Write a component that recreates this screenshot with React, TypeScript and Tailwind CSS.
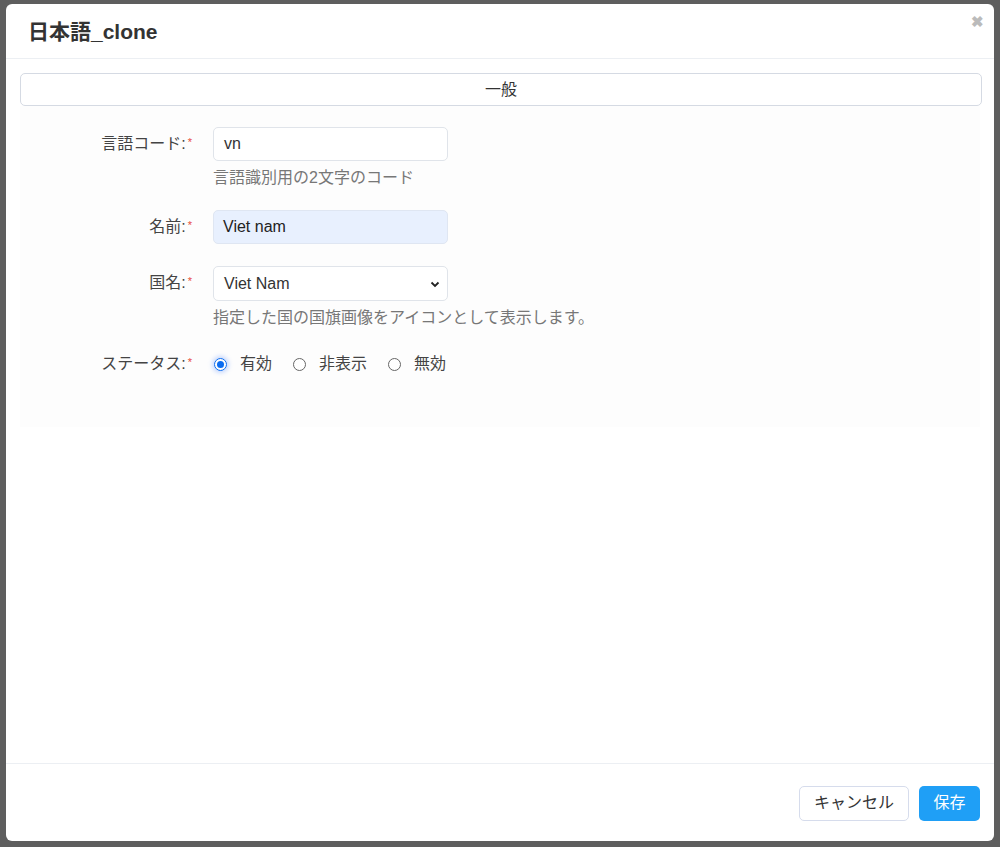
import React from "react";

const font = { fontFamily: '"Liberation Sans", "Noto Sans CJK JP", sans-serif' };

function Label({ children }: { children: React.ReactNode }) {
  return (
    <div className="text-right pr-[21px] text-[16px] text-[#444] leading-[34px]">
      {children}
      <span className="text-[#e74c3c] text-[11px] align-top relative top-[-2px] ml-[2px]">*</span>
    </div>
  );
}

function Radio({ checked, label }: { checked?: boolean; label: string }) {
  return (
    <label className="flex items-center gap-[13px] mr-[21px]">
      <span
        className={
          checked
            ? "w-[13px] h-[13px] rounded-full border border-[#0b6cf0] flex items-center justify-center shadow-[0_0_4px_2px_rgba(100,150,255,0.35)]"
            : "w-[13px] h-[13px] rounded-full border border-[#666] bg-white"
        }
      >
        {checked && <span className="w-[7px] h-[7px] rounded-full bg-[#0b6cf0]" />}
      </span>
      <span className="text-[16px] text-[#444]">{label}</span>
    </label>
  );
}

export default function App() {
  return (
    <div className="w-[1000px] h-[847px] bg-[#5e5e5e] pt-[4px] pl-[6px]" style={font}>
      <div className="w-[988px] h-[837px] bg-white rounded-[6px] flex flex-col relative">
        <div className="h-[55px] border-b border-[#eceff3] flex items-center pl-[22px] pt-[2px]">
          <h1 className="text-[21px] font-bold text-[#333]">日本語_clone</h1>
        </div>
        <button className="absolute right-[10px] top-[10px] text-[#bbb] text-[15px] font-bold leading-none">
          ✖
        </button>
        <div className="flex-1 px-[14px] pt-[14px]">
          <div className="h-[33px] border border-[#d5dae3] rounded-[5px] flex items-center justify-center text-[16px] text-[#333] mr-[-2px]">
            一般
          </div>
          <div className="bg-[#fdfdfd] pt-[21px] pb-[46px]">
            <div className="grid grid-cols-[193px_1fr] gap-y-[22px]">
              <Label>言語コード:</Label>
              <div>
                <div className="w-[235px] h-[34px] border border-[#e0e4ea] rounded-[5px] bg-white px-[10px] flex items-center text-[16px] text-[#333]">
                  vn
                </div>
                <div className="text-[16px] leading-[21px] text-[#777] mt-[6px]">言語識別用の2文字のコード</div>
              </div>
              <Label>名前:</Label>
              <div>
                <div className="w-[235px] h-[34px] border border-[#dfe6f2] rounded-[5px] bg-[#e8f0fe] px-[9px] flex items-center text-[16px] text-[#222]">
                  Viet nam
                </div>
              </div>
              <Label>国名:</Label>
              <div>
                <div className="w-[235px] h-[35px] border border-[#e0e4ea] rounded-[5px] bg-white pl-[10px] pr-[6px] flex items-center justify-between text-[16px] text-[#333]">
                  <span>Viet Nam</span>
                  <svg width="12" height="12" viewBox="0 0 12 12">
                    <path d="M2.5 4.5 L6 8 L9.5 4.5" fill="none" stroke="#222" strokeWidth="1.8" />
                  </svg>
                </div>
                <div className="text-[16px] leading-[21px] text-[#777] mt-[6px]">
                  指定した国の国旗画像をアイコンとして表示します。
                </div>
              </div>
              <div className="-mt-[3px]">
                <Label>ステータス:</Label>
              </div>
              <div className="flex items-center -mt-[3px] pl-[1px]">
                <Radio checked label="有効" />
                <Radio label="非表示" />
                <Radio label="無効" />
              </div>
            </div>
          </div>
        </div>
        <div className="h-[78px] border-t border-[#eceff3] flex items-center justify-end gap-[10px] pr-[14px] pt-[1px]">
          <button className="h-[35px] px-[14px] border border-[#d6dcec] rounded-[5px] bg-white text-[16px] text-[#333]">
            キャンセル
          </button>
          <button className="h-[35px] w-[61px] rounded-[5px] bg-[#1f9ff6] text-[16px] text-white">
            保存
          </button>
        </div>
      </div>
    </div>
  );
}
